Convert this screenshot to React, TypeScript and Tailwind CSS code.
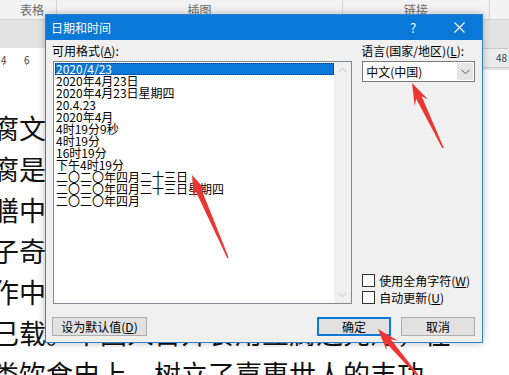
import React from "react";

const items = [
  "2020/4/23",
  "2020年4月23日",
  "2020年4月23日星期四",
  "20.4.23",
  "2020年4月",
  "4时19分9秒",
  "4时19分",
  "16时19分",
  "下午4时19分",
  "二〇二〇年四月二十三日",
  "二〇二〇年四月二十三日星期四",
  "二〇二〇年四月",
];

const lines = [
  "腐文化历史悠久，源远流长，在古代",
  "腐是中国人的发明，是中国传统的",
  "膳中不可缺少的美食。在汉代，淮南",
  "子奇思妙想发明了豆腐，此事在很多",
  "作中都有记载，北宋的文献中也有记",
  "已载。中国人首开食用豆腐之先河，在",
  "类饮食史上，树立了嘉惠世人的丰功",
];

function arrowPoints(tx: number, ty: number, sx: number, sy: number) {
  const dx = tx - sx;
  const dy = ty - sy;
  const len = Math.sqrt(dx * dx + dy * dy);
  const ux = dx / len;
  const uy = dy / len;
  const px = -uy;
  const py = ux;
  const headLen = 22;
  const headW = 7.5;
  const neckW = 3;
  const tailW = 0.8;
  const nx = tx - ux * headLen;
  const ny = ty - uy * headLen;
  const bx = tx - ux * (headLen - 6);
  const by = ty - uy * (headLen - 6);
  const pts = [
    [tx, ty],
    [nx + px * headW, ny + py * headW],
    [bx + px * neckW, by + py * neckW],
    [sx + px * tailW, sy + py * tailW],
    [sx - px * tailW, sy - py * tailW],
    [bx - px * neckW, by - py * neckW],
    [nx - px * headW, ny - py * headW],
  ];
  return pts.map((p) => `${p[0].toFixed(1)},${p[1].toFixed(1)}`).join(" ");
}

function Chevron({ className }: { className?: string }) {
  return (
    <svg width="9" height="6" viewBox="0 0 9 6" className={className}>
      <path d="M0.5 0.8 L4.5 4.8 L8.5 0.8" fill="none" stroke="currentColor" strokeWidth="1" />
    </svg>
  );
}

export default function App() {
  return (
    <div
      className="relative w-[509px] h-[375px] overflow-hidden bg-white"
      style={{ fontFamily: '"Noto Sans CJK SC", "Noto Sans", sans-serif' }}
    >
      {/* Ribbon group labels */}
      <div className="h-[20px] bg-[#f3f3f3] border-b border-[#d2d2d2] flex text-[12px] leading-[19px] text-[#6a6a6a]">
        <div className="w-[57px] border-r border-[#d6d6d6] flex justify-end pr-[12px]">表格</div>
        <div className="w-[286px] border-r border-[#d6d6d6] flex justify-center">插图</div>
        <div className="w-[147px] border-r border-[#d6d6d6] flex justify-center">链接</div>
        <div className="flex-1" />
      </div>
      {/* gray band */}
      <div className="h-[28px] bg-[#e3e3e3]" />
      {/* ruler */}
      <div className="h-[22px] bg-[#e3e3e3] flex">
        <div className="w-[483px] bg-white flex flex-col">
          <div className="h-[15px] flex text-[10px] leading-[15px] text-[#444] pt-[4px]">
            <span className="ml-[1px] w-[23px]">4</span>
            <span>6</span>
          </div>
          <div className="flex h-[5px]">
            <span className="ml-[3px] w-px h-[2px] bg-[#777]" />
            <span className="ml-[22px] w-px h-[2px] bg-[#777]" />
          </div>
        </div>
        <div className="flex-1 bg-[#ececec] border-y border-[#c9c9c9] h-[20px] text-[10px] leading-[18px] text-[#444] pl-[13px]">
          48
        </div>
      </div>
      {/* page text */}
      <div className="pt-[37px] -ml-[8px] text-[27px] leading-[41px] text-[#111] whitespace-nowrap">
        {lines.map((l, i) => (
          <div key={i}>{l}</div>
        ))}
      </div>

      {/* Dialog */}
      <div className="absolute left-[45px] top-[14px] w-[438px] h-[329px] border border-[#2b83d0] bg-[#f0f0f0] flex flex-col shadow-[0_0_8px_rgba(0,0,0,0.25)] text-[12px] text-black">
        <div className="h-[25px] bg-[#0a78d7] flex items-center text-white shrink-0">
          <div className="pl-[5px] flex-1 leading-[25px]">日期和时间</div>
          <div className="w-[46px] text-center text-[13px] leading-[25px]">?</div>
          <div className="w-[46px] flex justify-center">
            <svg width="11" height="11" viewBox="0 0 11 11">
              <path d="M0.5 0.5 L10.5 10.5 M10.5 0.5 L0.5 10.5" stroke="white" strokeWidth="1.2" />
            </svg>
          </div>
        </div>
        <div className="flex-1 flex flex-col px-[7px] pt-[3px]">
          <div className="flex gap-[10px]">
            {/* left column */}
            <div className="w-[300px] flex flex-col">
              <div className="h-[18px] leading-[16px] -ml-[1px]">
                可用格式(<span className="underline">A</span>):
              </div>
              <div className="h-[243px] border border-[#828790] bg-white flex">
                <div className="flex-1 flex flex-col pt-[1px] pl-px leading-[12px]">
                  {items.map((it, i) => (
                    <div
                      key={i}
                      className={
                        i === 0
                          ? "h-[12px] bg-[#0a78d7] text-white border border-dotted border-[#222] leading-[10px] pl-[0px]"
                          : "h-[12px] pl-px"
                      }
                    >
                      {it}
                    </div>
                  ))}
                </div>
                <div className="w-[17px] bg-[#f0f0f0] flex flex-col justify-between items-center py-[5px] text-[#c2c2c2]">
                  <Chevron className="rotate-180" />
                  <Chevron />
                </div>
              </div>
            </div>
            {/* right column */}
            <div className="w-[113px] flex flex-col">
              <div className="h-[18px] leading-[16px] -ml-[1px] whitespace-nowrap">
                语言(国家/地区)(<span className="underline">L</span>):
              </div>
              <div className="h-[21px] border border-[#7a7a7a] bg-white flex items-center">
                <div className="flex-1 pl-[3px] text-[12px] leading-[19px]">中文(中国)</div>
                <div className="w-[16px] h-[17px] mr-[1px] bg-[#e5e5e5] flex items-center justify-center text-[#555]">
                  <Chevron />
                </div>
              </div>
              <div className="flex-1" />
              <div className="flex flex-col gap-[4px]">
                <div className="flex items-center gap-[4px] h-[13px]">
                  <div className="w-[13px] h-[13px] border border-[#333] bg-white shrink-0" />
                  <span className="leading-[13px] whitespace-nowrap">
                    使用全角字符(<span className="underline">W</span>)
                  </span>
                </div>
                <div className="flex items-center gap-[4px] h-[13px]">
                  <div className="w-[13px] h-[13px] border border-[#333] bg-white shrink-0" />
                  <span className="leading-[13px] whitespace-nowrap">
                    自动更新(<span className="underline">U</span>)
                  </span>
                </div>
              </div>
            </div>
          </div>
          {/* buttons */}
          <div className="mt-[13px] flex items-center">
            <div className="-ml-[1px] w-[95px] h-[19px] border border-[#adadad] bg-[#e1e1e1] flex items-center justify-center leading-[17px]">
              设为默认值(<span className="underline">D</span>)
            </div>
            <div className="flex-1" />
            <div className="w-[74px] h-[19px] border-2 border-[#0a78d7] bg-[#e1e1e1] flex items-center justify-center leading-[15px]">
              确定
            </div>
            <div className="ml-[10px] w-[74px] h-[19px] border border-[#adadad] bg-[#e1e1e1] flex items-center justify-center leading-[17px]">
              取消
            </div>
          </div>
        </div>
      </div>

      {/* Red arrows */}
      <svg className="absolute left-0 top-0 pointer-events-none" width="509" height="375" viewBox="0 0 509 375">
        <polygon points={arrowPoints(192, 175, 228, 258)} fill="#ef3434" />
        <polygon points={arrowPoints(412, 83, 443, 148)} fill="#ef3434" />
        <polygon points={arrowPoints(378, 329, 420, 378)} fill="#ef3434" />
      </svg>
    </div>
  );
}
